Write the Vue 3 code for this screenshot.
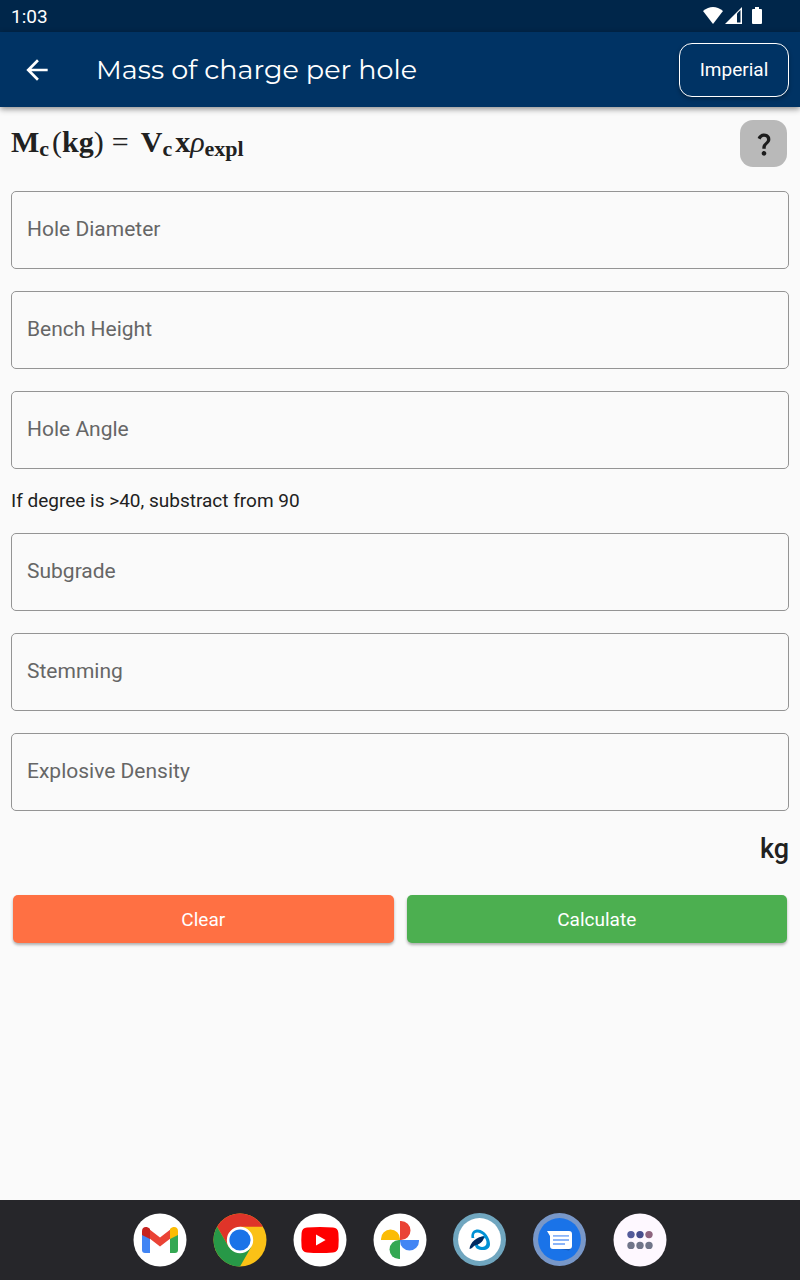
<script setup>
import { reactive, ref } from 'vue'

const holeFields = [
  { id: 'diameter', label: 'Hole Diameter' },
  { id: 'bench', label: 'Bench Height' },
  { id: 'angle', label: 'Hole Angle' },
]

const chargeFields = [
  { id: 'subgrade', label: 'Subgrade' },
  { id: 'stemming', label: 'Stemming' },
  { id: 'density', label: 'Explosive Density' },
]

const values = reactive({
  diameter: '',
  bench: '',
  angle: '',
  subgrade: '',
  stemming: '',
  density: '',
})
const result = ref('')

const clear = () => {
  Object.keys(values).forEach((key) => {
    values[key] = ''
  })
  result.value = ''
}

// diameter in mm, lengths in m, density in g/cm3
const calculate = () => {
  const radius = Number(values.diameter) / 2000
  const angle = (Number(values.angle) * Math.PI) / 180
  const length = Number(values.bench) / Math.cos(angle) + Number(values.subgrade) - Number(values.stemming)
  const mass = Math.PI * radius * radius * length * Number(values.density) * 1000
  result.value = mass ? mass.toFixed(2) : ''
}
</script>

<template>
  <div class="screen">
    <div class="status-bar">
      <span>1:03</span>
      <div class="status-bar__icons">
        <svg width="20" height="17" viewBox="0 0 20 17">
          <path d="M0 4Q10-4 20 4L10 17Z" fill="#fff" />
        </svg>
        <svg width="17" height="17" viewBox="0 0 17 17">
          <path d="M0 17L17 0V17Z" fill="#fff" />
          <path d="M12 6.5L15.5 3V15.5H12Z" fill="#00264a" />
        </svg>
        <svg class="battery" width="10" height="17" viewBox="0 0 10 17">
          <path d="M3 0H7V2H9Q10 2 10 3V16Q10 17 9 17H1Q0 17 0 16V3Q0 2 1 2H3Z" fill="#fff" />
        </svg>
      </div>
    </div>

    <header class="app-bar">
      <button type="button" class="back" aria-label="Back">
        <svg width="32" height="32" viewBox="0 0 24 24">
          <path d="M20 11H7.83l5.59-5.59L12 4l-8 8 8 8 1.41-1.41L7.83 13H20z" fill="#fff" />
        </svg>
      </button>
      <h1>Mass of charge per hole</h1>
      <button type="button" class="unit">Imperial</button>
    </header>

    <main>
      <div class="formula-row">
        <p class="formula">
          <b>M</b><sub>c</sub><span>(</span><b>kg</b><span>)</span>
          <span class="equals">=</span>
          <b>V</b><sub>c</sub><b>x</b><i>ρ</i><sub>expl</sub>
        </p>
        <button type="button" class="help" aria-label="Help">
          <svg width="28" height="28" viewBox="0 0 24 24">
            <path
              d="M11.07 12.85c.77-1.39 2.25-2.21 3.11-3.44.91-1.29.4-3.7-2.18-3.7-1.69 0-2.52 1.28-2.87 2.34L6.54 6.96C7.25 4.83 9.18 3 11.99 3c2.35 0 3.96 1.07 4.78 2.41.7 1.15 1.11 3.3.03 4.9-1.2 1.77-2.35 2.31-2.97 3.45-.25.46-.35.76-.35 2.24h-2.89c-.01-.78-.13-2.05.48-3.15zM14 20c0 1.1-.9 2-2 2s-2-.9-2-2 .9-2 2-2 2 .9 2 2z"
              fill="#1c1c1c"
            />
          </svg>
        </button>
      </div>

      <form @submit.prevent="calculate">
        <div v-for="field in holeFields" :key="field.id" class="field">
          <input :id="field.id" v-model="values[field.id]" type="text" inputmode="decimal" placeholder=" " />
          <label :for="field.id">{{ field.label }}</label>
        </div>
        <p class="hint">If degree is &gt;40, substract from 90</p>
        <div v-for="field in chargeFields" :key="field.id" class="field">
          <input :id="field.id" v-model="values[field.id]" type="text" inputmode="decimal" placeholder=" " />
          <label :for="field.id">{{ field.label }}</label>
        </div>
        <p class="result">{{ result }} kg</p>
        <div class="actions">
          <button type="button" class="clear" @click="clear">Clear</button>
          <button type="submit" class="calculate">Calculate</button>
        </div>
      </form>
    </main>

    <nav class="dock">
      <a href="#" aria-label="Gmail">
        <svg viewBox="0 0 54 54">
          <circle cx="27" cy="27" r="26.5" fill="#fff" />
          <path d="M9 18L17 24V40H12Q9 40 9 37Z" fill="#4285f4" />
          <path d="M45 18L37 24V40H42Q45 40 45 37Z" fill="#34a853" />
          <path d="M16 16L27 24.5L38 16V25L27 33.5L16 25Z" fill="#ea4335" />
          <path d="M9 22V18C9 14 13.5 12.5 17 16V26L9 22Z" fill="#c5221f" />
          <path d="M45 22V18C45 14 40.5 12.5 37 16V26L45 22Z" fill="#fbbc04" />
        </svg>
      </a>
      <a href="#" aria-label="Chrome">
        <svg viewBox="0 0 54 54">
          <circle cx="27" cy="27" r="26.5" fill="#fbc116" />
          <path d="M4.1 13.7A26.5 26.5 0 0 1 49.9 13.7H27L15.5 33.5Z" fill="#df3429" />
          <path d="M4.1 13.7A26.5 26.5 0 0 0 27 53.5L38.5 33.5L27 39L15.5 33.5Z" fill="#279847" />
          <circle cx="27" cy="27" r="13.2" fill="#fff" />
          <circle cx="27" cy="27" r="10.6" fill="#1a73e8" />
        </svg>
      </a>
      <a href="#" aria-label="YouTube">
        <svg viewBox="0 0 54 54">
          <circle cx="27" cy="27" r="26.5" fill="#fff" />
          <path
            d="M14 14.6Q27 13.6 40 14.6Q45 15 45.4 20Q46 27 45.4 34Q45 39 40 39.4Q27 40.4 14 39.4Q9 39 8.6 34Q8 27 8.6 20Q9 15 14 14.6Z"
            fill="#f00"
          />
          <path d="M23 21.6L32.6 27L23 32.4Z" fill="#fff" />
        </svg>
      </a>
      <a href="#" aria-label="Photos">
        <svg viewBox="0 0 54 54">
          <circle cx="27" cy="27" r="26.5" fill="#fff" />
          <path d="M27 8H28A9.5 9.5 0 0 1 28 27H27Z" fill="#ea4335" />
          <path d="M46 27V28A9.5 9.5 0 0 1 27 28V27Z" fill="#4285f4" />
          <path d="M27 46H26A9.5 9.5 0 0 1 26 27H27Z" fill="#34a853" />
          <path d="M8 27V26A9.5 9.5 0 0 1 27 26V27Z" fill="#fbbc04" />
        </svg>
      </a>
      <a href="#" aria-label="Blasting">
        <svg viewBox="0 0 54 54">
          <circle cx="26.5" cy="26.5" r="26.5" fill="#70a6bf" />
          <circle cx="26.5" cy="26.5" r="21.4" fill="#fff" />
          <path
            fill-rule="evenodd"
            d="M18.5 25C17.5 19 21 16.5 25 16.5C32 17 37 25 37 31C37 35 34 37 30 37C25 37 22 35 22 32C22 27 27 23.5 31 23C28 19.5 22 18 21 22C20.7 23 21 24 21.4 25ZM32 25C27 27 25 29 25 32C26 34 31 35 33 32C34 30 33.5 27 32 25Z"
            fill="#0091d5"
          />
          <path d="M31 23.5C25 23 17 29 16.5 36C19 36 20 33 23 32C28 31 31 27 31 23.5Z" fill="#002a61" />
        </svg>
      </a>
      <a href="#" aria-label="Messages">
        <svg viewBox="0 0 54 54">
          <circle cx="26.5" cy="26.5" r="26.5" fill="#7897c8" />
          <circle cx="26.5" cy="26.5" r="21.4" fill="#1a73e8" />
          <path d="M17 34L36 37.5L39 34V24L36 20Z" fill="#1558b5" />
          <path d="M14 18H36Q39 18 39 21V33Q39 36 36 36H20Q17 36 17 33V23Z" fill="#fff" />
          <path d="M20 22.8H36M20 27H36M20 31H32" stroke="#8ab4f8" stroke-width="1.8" />
        </svg>
      </a>
      <a href="#" aria-label="All apps">
        <svg viewBox="0 0 54 54">
          <circle cx="27" cy="27" r="26.5" fill="#fef8ff" />
          <circle cx="18" cy="21.6" r="3.7" fill="#535b9a" />
          <circle cx="27" cy="21.6" r="3.7" fill="#464e8d" />
          <circle cx="36" cy="21.6" r="3.7" fill="#8e647f" />
          <circle cx="18" cy="32.4" r="3.7" fill="#707589" />
          <circle cx="27" cy="32.4" r="3.7" fill="#707589" />
          <circle cx="36" cy="32.4" r="3.7" fill="#707589" />
        </svg>
      </a>
    </nav>
  </div>
</template>

<style>
body {
  margin: 0;
  background: #fafafa;
}
</style>

<style scoped>
.screen {
  display: flex;
  flex-direction: column;
  min-height: 100vh;
  color: #212121;
  font-family: Roboto, 'Noto Sans', sans-serif;
  font-size: 19px;
}

.screen * {
  box-sizing: border-box;
}

svg {
  display: block;
}

h1,
p {
  margin: 0;
}

button {
  padding: 0;
  border: none;
  font: inherit;
  cursor: pointer;
}

.status-bar {
  display: flex;
  align-items: center;
  justify-content: space-between;
  height: 32px;
  padding: 0 38px 0 11px;
  background: #00264a;
  color: #fff;
}

.status-bar__icons {
  display: flex;
  gap: 2px;
  padding-bottom: 2px;
}

.battery {
  margin-left: 8px;
}

.app-bar {
  display: flex;
  align-items: center;
  height: 75px;
  padding: 0 11px 0 21px;
  background: #003364;
  box-shadow: 0 2px 6px rgba(0, 0, 0, 0.45);
  color: #fff;
}

.back {
  background: none;
}

h1 {
  flex: 1;
  margin-left: 43px;
  font-family: Montserrat, Inter, sans-serif;
  font-size: 27px;
  font-weight: 400;
  line-height: 34px;
}

.unit {
  width: 110px;
  height: 54px;
  border: 1px solid #fff;
  border-radius: 13px;
  background: #003364;
  box-shadow: 0 2px 4px rgba(0, 0, 0, 0.3);
  color: #fff;
}

main {
  flex: 1;
  padding: 13px 11px 24px;
}

.formula-row {
  display: flex;
  justify-content: space-between;
  padding-right: 2px;
}

.formula {
  font-family: KaTeX_Main, 'Liberation Serif', serif;
  font-size: 30px;
  line-height: 44px;
  white-space: nowrap;
}

.formula sub {
  margin-right: 3px;
  font-size: 22px;
  font-weight: 700;
  line-height: 0;
  vertical-align: -4px;
}

.equals {
  margin: 0 12px 0 8px;
}

.help {
  display: grid;
  place-items: center;
  width: 47px;
  height: 47px;
  border-radius: 13px;
  background: #b9b9b9;
}

form {
  display: flex;
  flex-direction: column;
  gap: 22px;
  margin-top: 24px;
}

.field {
  position: relative;
}

.field input {
  display: block;
  width: 100%;
  height: 78px;
  padding: 0 16px;
  border: 1px solid #949494;
  border-radius: 5px;
  outline: none;
  background: transparent;
  color: #212121;
  font: inherit;
  font-size: 21px;
}

.field label {
  position: absolute;
  top: 24px;
  left: 12px;
  padding: 0 4px;
  background: #fafafa;
  color: #666;
  font-size: 21px;
  line-height: 28px;
  pointer-events: none;
}

.field input:focus {
  border-color: #003364;
}

.field input:focus + label,
.field input:not(:placeholder-shown) + label {
  top: -10px;
  font-size: 16px;
  line-height: 20px;
}

.hint {
  line-height: 20px;
}

.result {
  font-size: 27px;
  font-weight: 500;
  line-height: 32px;
  text-align: right;
}

.actions {
  display: grid;
  grid-template-columns: 1fr 1fr;
  gap: 13px;
  padding: 8px 2px 0;
}

.actions button {
  height: 48px;
  border-radius: 5px;
  box-shadow: 0 2px 3px rgba(0, 0, 0, 0.3);
  color: #fff;
}

.actions .clear {
  background: #ff7043;
}

.actions .calculate {
  background: #4caf50;
}

.dock {
  display: flex;
  align-items: center;
  justify-content: center;
  gap: 26px;
  height: 80px;
  background: #26262a;
}

.dock a {
  width: 54px;
  height: 54px;
}
</style>
